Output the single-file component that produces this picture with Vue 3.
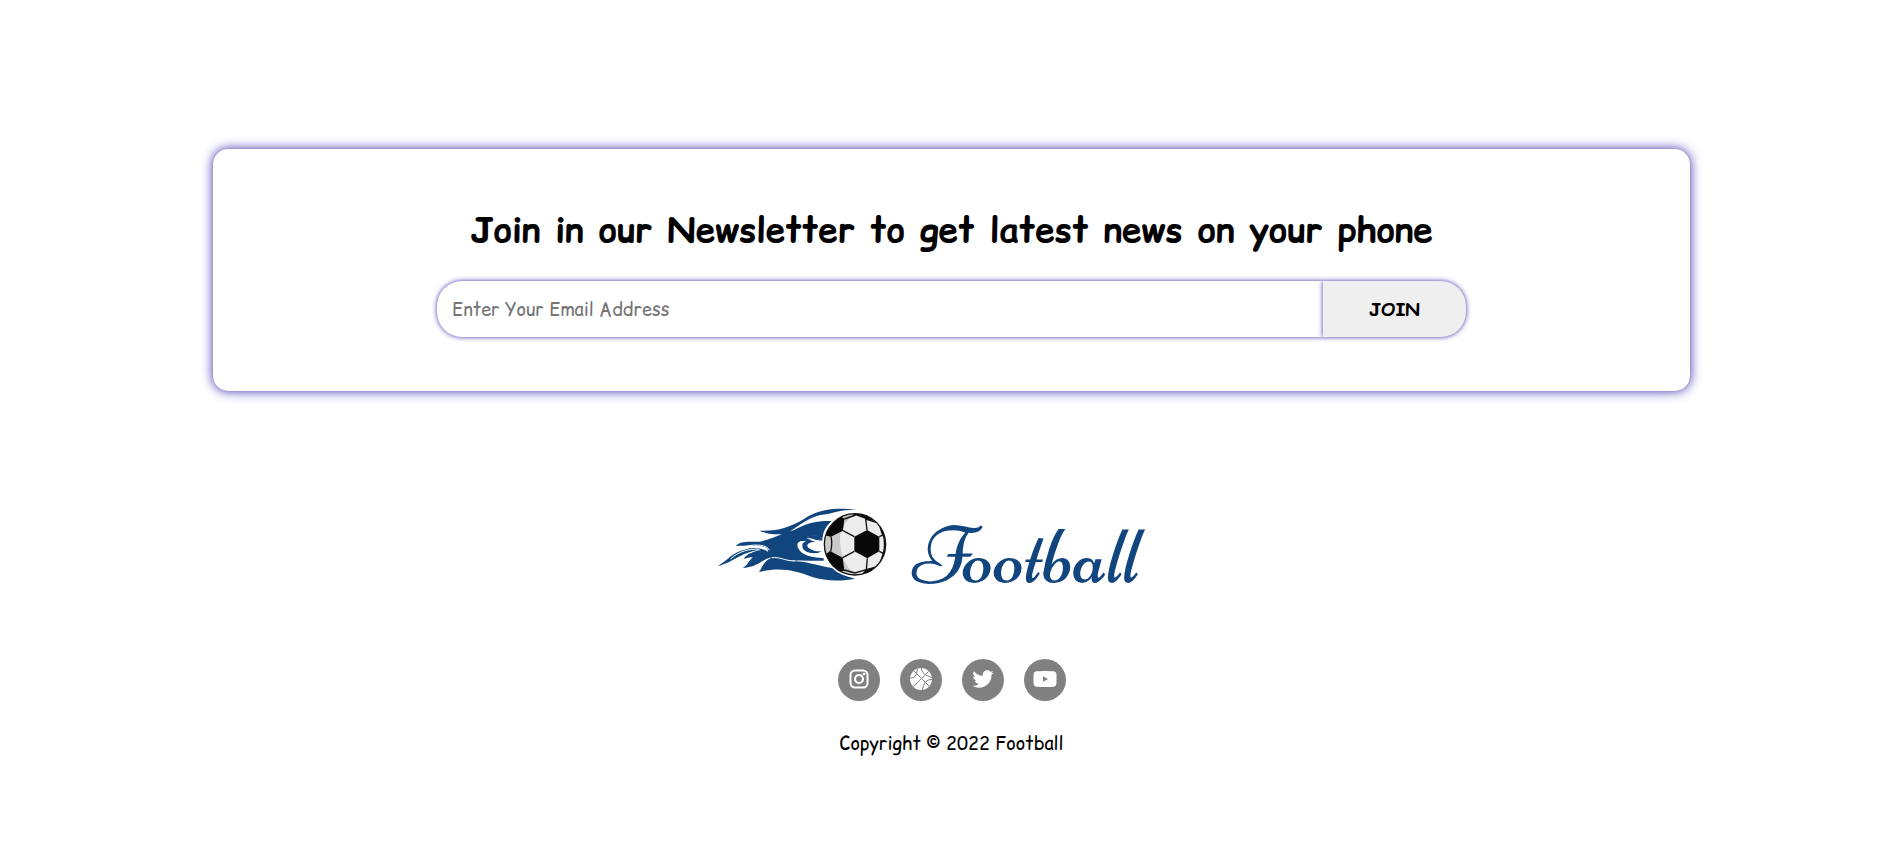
<script setup>
import { ref } from 'vue'

const email = ref('')
</script>

<template>
  <div class="page">
    <main class="newsletter">
      <h1>Join in our Newsletter to get latest news on your phone</h1>
      <form class="signup" @submit.prevent>
        <input v-model="email" type="email" aria-label="Email address" placeholder="Enter Your Email Address" />
        <button type="submit">JOIN</button>
      </form>
    </main>

    <footer>
      <a class="brand" href="#">
        <svg class="emblem" viewBox="50 50 510 222" aria-hidden="true">
          <g fill="#11457e">
            <path d="M177 121C236 123 272 109 312 85C360 56 400 52 466 58C420 59 400 66 377 72C330 76 300 104 268 124C300 113 320 90 395 92C376 108 366 126 367 150C362 136 340 133 318 140C345 136 350 146 366 153C334 143 317 154 318 169C320 181 342 187 365 183C340 196 303 190 295 171C288 160 304 155 317 157C300 157 289 164 293 174C299 193 330 202 370 205C345 214 300 206 246 213C310 207 340 224 400 234C421 249 440 261 465 265C420 274 371 271 336 260C287 242 243 229 176 245C187 231 190 209 220 201C180 205 181 229 127 233C149 222 143 207 163 199C139 208 156 188 188 179C130 178 96 219 52 227C83 211 93 187 137 177C160 169 185 174 202 184C208 169 183 162 107 167C119 151 148 155 178 154C208 148 225 139 245 132C217 132 204 132 177 121Z" />
          </g>
          <path d="M292 168C287 152 309 148 322 156C302 164 309 183 336 188C350 190 360 187 368 184V205C330 203 298 192 292 168Z" fill="#fff" />
          <path d="M306 163C307 151 333 148 345 154C319 157 322 177 348 183L360 184C338 194 303 186 306 163Z" fill="#11457e" />
          <path d="M320 140C344 129 364 138 370 152C349 148 340 139 320 140Z" fill="#11457e" />
          <path d="M318 143C338 141 344 152 368 153V180C350 183 323 179 321 167C320 158 332 155 345 154C336 147 326 149 318 143Z" fill="#fff" />
          <path d="M294 174C302 194 330 201 370 204V211C337 213 301 209 270 210Z" fill="#11457e" />
          <path d="M130 205C139 191 160 181 190 178C207 181 200 194 186 200C166 207 156 226 129 233C148 218 146 207 168 195C153 201 141 204 130 205Z" fill="#11457e" />
          <g fill="none" stroke="#fff" stroke-linecap="round">
            <path d="M138 168C165 160 202 164 207 179M92 205C116 182 147 175 176 177" stroke-width="3" />
            <path d="M216 202C238 199 251 211 283 212" stroke-width="3" />
          </g>
          <circle cx="464" cy="162" r="99" fill="#fff" />
          <clipPath id="ball"><circle cx="464" cy="162" r="92" /></clipPath>
          <g clip-path="url(#ball)">
            <path d="M370 68H560V260H370Z" fill="#ececec" />
            <path d="M370 68H470Q412 104 420 163Q423 218 470 260H370Z" fill="#cacaca" />
            <g fill="#080808">
              <path d="M462 139L500 119L537 139V183L501 204L462 183Z" />
              <path d="M432 86L428 121L392 139L360 132V80L410 70Z" />
              <path d="M389 182L427 202L432 239L402 248L360 205Z" />
              <path d="M453 70Q475 66 497 75L523 92L496 86L466 75Z" />
              <path d="M495 238L533 228L510 252L480 258Z" />
              <path d="M532 94L545 135L558 145V100Z" />
              <path d="M533 231L547 189L560 178V225Z" />
            </g>
            <path d="M432 86L466 74M496 86L528 96M500 119L496 86M428 121L462 139M392 139Q397 161 391 183M427 202L462 183M501 204L498 238M537 139L549 134Q556 162 549 189L537 183M432 239L464 248L498 238L533 229M430 86L413 77M432 239L414 243" fill="none" stroke="#111" stroke-width="4" />
          </g>
          <circle cx="464" cy="162" r="92" fill="none" stroke="#111" stroke-width="4" />
        </svg>
        <span class="wordmark">Football</span>
      </a>

      <nav class="social" aria-label="Social media">
        <a href="#" aria-label="Instagram">
          <svg viewBox="0 0 24 24">
            <rect x="3.5" y="2.5" width="17" height="17" rx="4.5" fill="none" stroke="#fff" stroke-width="2" />
            <circle cx="12" cy="11" r="4" fill="none" stroke="#fff" stroke-width="2.2" />
            <circle cx="17" cy="6" r="1.3" fill="#fff" />
          </svg>
        </a>
        <a href="#" aria-label="Dribbble">
          <svg viewBox="0 0 24 24">
            <circle cx="12" cy="11" r="11" fill="#fff" />
            <path d="M5 3L20 18M19.5 3.5L4.5 18.5M1 10Q8 11 8.5 .5M12.5 0Q12 6.5 23 9.5M23 11.5Q14.5 11 13.5 22" fill="none" stroke="#808080" />
          </svg>
        </a>
        <a href="#" aria-label="Twitter">
          <svg viewBox="-32 -8 576 576">
            <path fill="#fff" d="M459.37 151.716c.325 4.548.325 9.097.325 13.645 0 138.72-105.583 298.558-298.558 298.558-59.452 0-114.68-17.219-161.137-47.106 8.447.974 16.568 1.299 25.34 1.299 49.055 0 94.213-16.568 130.274-44.832-46.132-.975-84.792-31.188-98.112-72.772 6.498.974 12.995 1.624 19.818 1.624 9.421 0 18.843-1.3 27.614-3.573-48.081-9.747-84.143-51.98-84.143-102.985v-1.299c13.969 7.797 30.214 12.67 47.431 13.319-28.264-18.843-46.781-51.005-46.781-87.391 0-19.492 5.197-37.36 14.294-52.954 51.655 63.675 129.3 105.258 216.365 109.807-1.624-7.797-2.599-15.918-2.599-24.04 0-57.828 46.782-104.934 104.934-104.934 30.213 0 57.502 12.67 76.67 33.137 23.715-4.548 46.456-13.32 66.599-25.34-7.798 24.366-24.366 44.833-46.132 57.827 21.117-2.273 41.584-8.122 60.426-16.243-14.292 20.791-32.161 39.308-52.628 54.253z" />
          </svg>
        </a>
        <a href="#" aria-label="YouTube">
          <svg viewBox="0 0 24 24">
            <path fill="#fff" fill-rule="evenodd" d="M4 3.2Q12 2.6 20 3.2Q23.5 3.3 23.5 7V15Q23.5 18.5 20 18.8Q12 19.3 4 18.8Q.5 18.5 .5 15V7Q.5 3.3 4 3.2ZM10 8.2V13.8L15 11Z" />
          </svg>
        </a>
      </nav>
      <p>Copyright © 2022 Football</p>
    </footer>
  </div>
</template>

<style>
body {
  background: #fff;
}
</style>

<style scoped>
.page {
  box-sizing: border-box;
  padding: 149px 32px 96px;
  color: #000;
  font-family: "Comic Sans MS", "Comic Relief", "Comic Neue", "Open Sans", sans-serif;
}

.newsletter {
  box-sizing: border-box;
  max-width: 1477px;
  margin: 0 auto;
  padding: 57px 32px 54px;
  border-radius: 15px;
  box-shadow: 0 0 12px #3a2fae, 0 0 1px #aaa4dc;
  text-align: center;
}

h1 {
  margin: 0 0 27px;
  font-size: 35px;
  line-height: 48px;
}

.signup {
  display: flex;
  max-width: 1029px;
  height: 56px;
  margin: 0 auto;
}

input,
button {
  box-sizing: border-box;
  margin: 0;
  border: 0;
  box-shadow: 0 0 5px #3a2fae;
  font: inherit;
  font-size: 18px;
}

input {
  flex: 1;
  min-width: 0;
  padding: 0 15px;
  border-radius: 25px 0 0 25px;
  background: #fff;
}

input::placeholder {
  color: #757575;
}

button {
  width: 143px;
  border-radius: 0 25px 25px 0;
  background: #efefef;
  color: #000;
  font-weight: 700;
}

footer {
  display: flex;
  flex-direction: column;
  align-items: center;
  padding-top: 115px;
}

.brand {
  display: flex;
  align-items: center;
  gap: 26px;
  height: 76px;
  margin-right: 46px;
  color: #11457e;
  text-decoration: none;
}

.emblem {
  width: 170px;
  height: 74px;
}

.wordmark {
  padding-top: 24px;
  font-family: "Niconne", "Great Vibes", "Liberation Serif", serif;
  font-size: 82px;
  line-height: 72px;
}

.social {
  display: flex;
  gap: 20px;
  margin-top: 77px;
}

.social a {
  display: grid;
  place-items: center;
  width: 42px;
  height: 42px;
  border-radius: 50%;
  background: #808080;
}

.social svg {
  width: 24px;
  height: 24px;
}

p {
  margin: 29px 0 0;
  font-size: 18px;
  line-height: 28px;
}
</style>
